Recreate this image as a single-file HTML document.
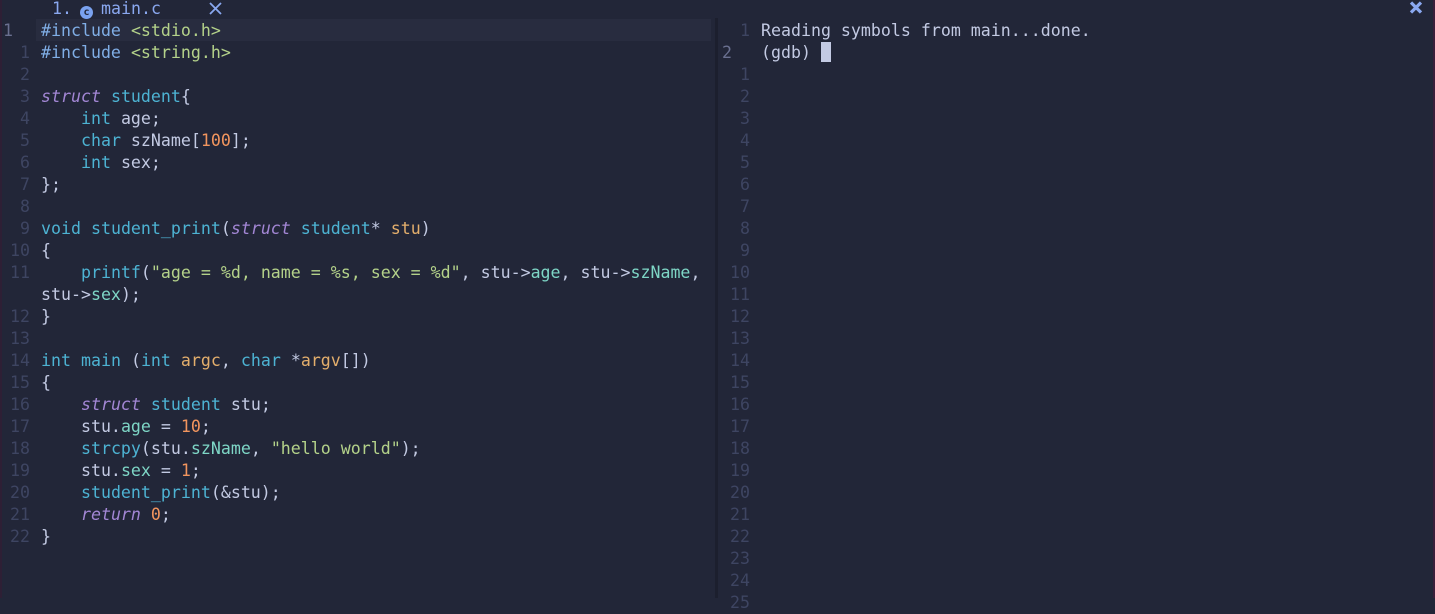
<!DOCTYPE html>
<html><head><meta charset="utf-8"><style>
html,body{margin:0;padding:0}
body{width:1435px;height:598px;background:#222638;position:relative;overflow:hidden;font-family:"DejaVu Sans Mono","Liberation Mono",monospace;font-size:16.6px;color:#c3cae3}
.bl{position:absolute;left:0;top:0;width:2px;height:598px;background:#2e1f35}
.br{position:absolute;right:0;top:0;width:2px;height:598px;background:#3a1e3a}
.sep{position:absolute;left:715px;top:18px;width:3px;height:580px;background:#1c1f2e}
.row{position:absolute;height:22px;line-height:22px;white-space:pre}
.ln{position:absolute;width:30px;text-align:right;color:#3e4562;height:22px;line-height:22px}
.hl{position:absolute;left:36px;top:19px;width:675px;height:22px;background:#282c3f}
.k{color:#4db3d3}.i{color:#a286d4;font-style:italic}.s{color:#b4d28a}.n{color:#f2955e}.m{color:#7ed6c6}.p{color:#e3ae6c}.inc{color:#80aee6}
.tab{position:absolute;top:-1px;height:20px;line-height:20px;color:#8aa8f0}
</style></head><body>
<div class="bl"></div><div class="br"></div><div class="sep"></div>
<div class="tab" style="left:52px">1.</div>
<div class="tab" style="left:80px;top:0px"><span style="display:inline-block;width:13px;height:13px;border-radius:50%;background:#7aa2f0;color:#222638;font-size:10px;line-height:13px;text-align:center;font-weight:bold">c</span></div>
<div class="tab" style="left:101px">main.c</div>
<svg style="position:absolute;left:209px;top:2px" width="13" height="13" viewBox="0 0 13 13"><path d="M1 1L12 12M12 1L1 12" stroke="#8aa8f0" stroke-width="1.8"/></svg>
<svg style="position:absolute;left:1409px;top:1px" width="14" height="13" viewBox="0 0 14 13"><path d="M2 1.5L12 11.5M12 1.5L2 11.5" stroke="#8aa8f0" stroke-width="3.2"/></svg>
<div class="hl"></div>
<div class="ln" style="left:0;top:20px;text-align:left;padding-left:3px;color:#6a7090">1</div>
<div id="L"></div>
<script>
var lines=[
'<span class="inc">#include</span> <span class="s">&lt;stdio.h&gt;</span>',
'<span class="inc">#include</span> <span class="s">&lt;string.h&gt;</span>',
'',
'<span class="i">struct</span> <span class="k">student</span>{',
'    <span class="k">int</span> age;',
'    <span class="k">char</span> szName[<span class="n">100</span>];',
'    <span class="k">int</span> sex;',
'};',
'',
'<span class="k">void</span> <span class="k">student_print</span>(<span class="i">struct</span> <span class="k">student</span>* <span class="p">stu</span>)',
'{',
'    <span class="k">printf</span>(<span class="s">"age = %d, name = %s, sex = %d"</span>, stu-&gt;<span class="m">age</span>, stu-&gt;<span class="m">szName</span>,',
'stu-&gt;<span class="m">sex</span>);',
'}',
'',
'<span class="k">int</span> <span class="k">main</span> (<span class="k">int</span> <span class="p">argc</span>, <span class="k">char</span> *<span class="p">argv</span>[])',
'{',
'    <span class="i">struct</span> <span class="k">student</span> stu;',
'    stu.<span class="m">age</span> = <span class="n">10</span>;',
'    <span class="k">strcpy</span>(stu.<span class="m">szName</span>, <span class="s">"hello world"</span>);',
'    stu.<span class="m">sex</span> = <span class="n">1</span>;',
'    <span class="k">student_print</span>(&amp;stu);',
'    <span class="i">return</span> <span class="n">0</span>;',
'}'];
var nums=['',1,2,3,4,5,6,7,8,9,10,11,'',12,13,14,15,16,17,18,19,20,21,22];
var h='';
for(var j=0;j<lines.length;j++){var t=20+22*j;
h+='<div class="ln" style="left:0;top:'+t+'px">'+nums[j]+'</div><div class="row" style="left:41px;top:'+t+'px">'+lines[j]+'</div>';}
var rn=[1,'',1,2,3,4,5,6,7,8,9,10,11,12,13,14,15,16,17,18,19,20,21,22,23,24,25];
for(var j=0;j<rn.length;j++){var t=20+22*j;
h+='<div class="ln" style="left:720px;top:'+t+'px">'+rn[j]+'</div>';}
h+='<div class="ln" style="left:722px;top:42px;text-align:left;color:#6a7090">2</div>';
h+='<div class="row" style="left:761px;top:20px">Reading symbols from main...done.</div>';
h+='<div class="row" style="left:761px;top:42px">(gdb) <span style="display:inline-block;width:10px;height:20px;background:#c3cae3;vertical-align:-4px"></span></div>';
document.getElementById('L').innerHTML=h;
</script>
</body></html>
